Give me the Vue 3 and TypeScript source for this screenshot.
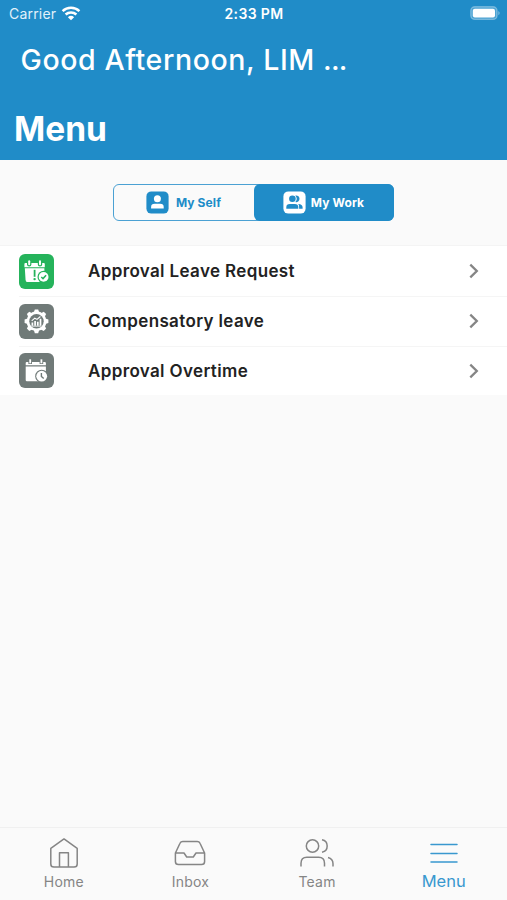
<script setup lang="ts">
import { ref } from 'vue'

interface MenuItem {
  id: 'leave' | 'compensatory' | 'overtime'
  label: string
}

const items: MenuItem[] = [
  { id: 'leave', label: 'Approval Leave Request' },
  { id: 'compensatory', label: 'Compensatory leave' },
  { id: 'overtime', label: 'Approval Overtime' },
]

const scope = ref<'self' | 'work'>('work')
const teeth: number[] = [0, 45, 90, 135, 180, 225, 270, 315]
</script>

<template>
  <div class="screen">
    <header class="header">
      <div class="status">
        <div class="status-side">
          <span class="carrier">Carrier</span>
          <svg class="wifi" width="20" height="15" viewBox="0 0 20 15">
            <path d="M1.6 5.2 A12.2 12.2 0 0 1 18.4 5.2" />
            <path d="M4.6 8.5 A8 8 0 0 1 15.4 8.5" />
            <path class="wifi-dot" d="M10 14.3 L6.9 11.2 A4.5 4.5 0 0 1 13.1 11.2 Z" />
          </svg>
        </div>
        <span class="clock">2:33 PM</span>
        <div class="status-side status-end">
          <svg width="31" height="15" viewBox="0 0 31 15">
            <rect x="0.8" y="0.8" width="26.2" height="12.6" rx="4" fill="#fff" fill-opacity="0.2" stroke="#fff" stroke-opacity="0.32" stroke-width="1.4" />
            <rect x="2.8" y="2.7" width="22.2" height="8.8" rx="2" fill="#fff" />
            <path d="M28.4 5 Q30.8 7.1 28.4 9.2 Z" fill="#fff" fill-opacity="0.45" />
          </svg>
        </div>
      </div>
      <p class="greeting">Good Afternoon, LIM <span class="dots">...</span></p>
      <h1 class="title">Menu</h1>
    </header>

    <div class="switcher">
      <div class="segments">
        <button class="segment segment-self" :class="{ active: scope === 'self' }" @click="scope = 'self'">
          <svg width="23" height="23" viewBox="0 0 23 23">
            <rect class="badge" x="0.4" y="0.4" width="22.2" height="22.2" rx="5" />
            <g class="figure">
              <circle cx="11.4" cy="7.7" r="3.5" />
              <path d="M5.1 17.6 V16 Q5.1 12.7 8.6 12.7 H14.2 Q17.7 12.7 17.7 16 V17.6 Z" />
            </g>
          </svg>
          <span>My Self</span>
        </button>
        <button class="segment segment-work" :class="{ active: scope === 'work' }" @click="scope = 'work'">
          <svg width="23" height="23" viewBox="0 0 23 23">
            <rect class="badge" x="0.4" y="0.4" width="22.2" height="22.2" rx="5" />
            <g class="figure">
              <circle cx="9.4" cy="7.8" r="3.3" />
              <path d="M12.3 4.5 A3.4 3.4 0 1 1 12.3 11.1 Q15.2 7.8 12.3 4.5 Z" />
              <path d="M3.3 17.8 V16.1 Q3.3 12.9 6.9 12.9 H11.8 Q15.3 12.9 15.3 16.1 V17.8 Z" />
              <path d="M15.2 12.9 Q19.6 13.1 19.6 16.3 V17.8 H16.1 V16 Q16.3 14 15.2 12.9 Z" />
            </g>
          </svg>
          <span>My Work</span>
        </button>
      </div>
    </div>

    <ul class="list">
      <li v-for="item in items" :key="item.id" class="row">
        <span class="tile" :class="'tile-' + item.id">
          <svg v-if="item.id === 'leave'" width="35" height="35" viewBox="0 0 35 35">
            <g fill="#fff">
              <rect x="9.2" y="6.3" width="2" height="5" rx="1" />
              <rect x="20" y="6.3" width="2" height="5" rx="1" />
              <path d="M5.4 13.3 V10 Q5.4 9 6.4 9 H8 V10.5 Q8 12.5 10.2 12.5 T12.4 10.5 V9 H18.8 V10.5 Q18.8 12.5 21 12.5 T23.2 10.5 V9 H24.8 Q25.8 9 25.8 10 V13.3 Z" />
              <path d="M5.8 14.3 H25.4 V27 Q25.4 28 24.4 28 H8 Q6.8 28 6.6 26 Z" />
            </g>
            <path d="M15.6 15.8 V22.8" stroke="#25b35b" stroke-width="1.8" />
            <circle cx="15.6" cy="25.1" r="1.2" fill="#25b35b" />
            <circle cx="24.6" cy="22.9" r="6.1" fill="#25b35b" />
            <circle cx="24.6" cy="22.9" r="4.9" fill="#fff" />
            <path d="M22.3 23 L24 24.6 L27.1 21.2" fill="none" stroke="#25b35b" stroke-width="1.5" />
          </svg>
          <svg v-else-if="item.id === 'compensatory'" width="35" height="35" viewBox="0 0 35 35">
            <g fill="#fff">
              <circle cx="17.5" cy="17.3" r="10" />
              <path v-for="angle in teeth" :key="angle" d="M14.8 8.5 L15.8 5.4 H19.2 L20.2 8.5 Z" :transform="`rotate(${angle} 17.5 17.3)`" />
            </g>
            <circle cx="17.5" cy="17.3" r="7.2" fill="#707a78" />
            <g stroke="#fff" fill="none">
              <path d="M13.4 21.8 V18.4 M16.1 21.8 V17.1 M18.8 21.8 V17.8 M21.5 21.8 V14.7" stroke-width="1.7" />
              <path d="M12.7 16.8 L15.8 14.2 L18 15.4 L21.4 12.5" stroke-width="1.1" />
              <path d="M12.2 22.2 H22.6" stroke-width="0.8" />
            </g>
          </svg>
          <svg v-else width="35" height="35" viewBox="0 0 35 35">
            <g fill="#fff">
              <rect x="10.3" y="6.3" width="1.8" height="4" />
              <rect x="21.5" y="6.3" width="1.8" height="4" />
              <path d="M6.7 12.3 V10 Q6.7 8.9 7.8 8.9 H9.4 V11 H13 V8.9 H20.6 V11 H24.2 V8.9 H25.8 Q26.9 8.9 26.9 10 V12.3 Z" />
              <path d="M6.7 13.6 H26.9 V27 Q26.9 28.2 25.7 28.2 H7.9 Q6.7 28.2 6.7 27 Z" />
            </g>
            <circle cx="22.7" cy="23.2" r="6.5" fill="#707a78" />
            <circle cx="22.7" cy="23.2" r="5.4" fill="#fff" />
            <path d="M22.4 19.9 V23.4 L24.7 25.6" fill="none" stroke="#707a78" stroke-width="1.4" />
          </svg>
        </span>
        <span class="label">{{ item.label }}</span>
        <svg class="chevron" width="12" height="16" viewBox="0 0 12 16">
          <path d="M2.3 1.6 L8.8 8 L2.3 14.4" />
        </svg>
      </li>
    </ul>

    <nav class="tabs">
      <a class="tab">
        <svg width="34" height="34" viewBox="0 0 34 34">
          <path d="M3.8 11.4 L17 1.9 L30.2 11.4 V27 Q30.2 30.1 27.1 30.1 H6.9 Q3.8 30.1 3.8 27 Z M12.5 30.1 V15.8 H21.4 V30.1" />
        </svg>
        <span>Home</span>
      </a>
      <a class="tab">
        <svg width="34" height="34" viewBox="0 0 34 34">
          <path d="M2.4 16 L7 6.3 Q7.8 4.5 9.8 4.5 H24.2 Q26.2 4.5 27 6.3 L31.6 16 V24.4 Q31.6 27.5 28.5 27.5 H5.5 Q2.4 27.5 2.4 24.4 Z M2.4 16 H11 L13.7 20 H20.3 L23 16 H31.6" />
        </svg>
        <span>Inbox</span>
      </a>
      <a class="tab">
        <svg width="34" height="34" viewBox="0 0 34 34">
          <circle cx="12.5" cy="9" r="6.2" />
          <path d="M22 2.8 A6.3 6.3 0 0 1 22 15.2 M1 29.4 V26.2 Q1 20.3 6.9 20.3 H18.6 Q24.5 20.3 24.5 26.2 V29.4 M28 20.5 Q33 21.9 33 26.8 V29.4" />
        </svg>
        <span>Team</span>
      </a>
      <a class="tab tab-active">
        <svg width="34" height="34" viewBox="0 0 34 34">
          <path d="M4 7.5 H30 M4 16.4 H30 M4 25 H30" stroke-linecap="round" />
        </svg>
        <span>Menu</span>
      </a>
    </nav>
  </div>
</template>

<style>
body {
  margin: 0;
  background: #fafafa;
}
</style>

<style scoped>
.screen {
  box-sizing: border-box;
  display: flex;
  flex-direction: column;
  width: 100%;
  height: 900px;
  overflow: hidden;
  background: #fafafa;
  font-family: Inter, "Liberation Sans", sans-serif;
}
.header {
  flex: none;
  height: 159.5px;
  background: #208cc8;
  color: #fff;
}
.status {
  display: grid;
  grid-template-columns: 1fr auto 1fr;
  align-items: center;
  height: 27px;
  padding: 0 6px 0 9px;
}
.status-side {
  display: flex;
  align-items: center;
  gap: 5px;
}
.status-end {
  justify-content: flex-end;
}
.carrier {
  font-size: 14px;
  letter-spacing: 0.2px;
  color: #e2f1fa;
}
.wifi {
  fill: none;
  stroke: #fff;
  stroke-width: 2.5;
}
.wifi .wifi-dot {
  fill: #fff;
  stroke: none;
}
.clock {
  margin-right: 2px;
  font-size: 14px;
  font-weight: 600;
  letter-spacing: 0.35px;
}
.greeting {
  margin: 14px 0 0 20.5px;
  font-size: 28.5px;
  font-weight: 500;
  line-height: 38px;
  letter-spacing: 0.6px;
  white-space: nowrap;
}
.dots {
  letter-spacing: -0.8px;
}
.title {
  margin: 27.5px 0 0 14px;
  font-size: 33.5px;
  font-weight: 700;
  line-height: 45px;
}
.switcher {
  box-sizing: border-box;
  flex: none;
  display: flex;
  justify-content: center;
  height: 86.5px;
  padding-top: 24.5px;
  border-bottom: 1.5px solid #f4f4f4;
}
.segments {
  box-sizing: border-box;
  display: flex;
  width: 281px;
  height: 37px;
  border: 1.5px solid #4ba1d3;
  border-radius: 6px;
}
.segment {
  display: flex;
  align-items: center;
  justify-content: center;
  flex: 1;
  gap: 7px;
  margin: 0;
  padding: 0;
  border: 0;
  border-radius: 5px;
  background: transparent;
  color: #208cc8;
  font-family: inherit;
  font-size: 12px;
  font-weight: 700;
  letter-spacing: 0.1px;
}
.segment-self {
  padding-right: 2px;
}
.segment-work {
  gap: 5px;
  margin: -1px;
  padding-right: 1px;
}
.segment.active {
  border-radius: 6px;
  background: #208cc8;
  color: #fff;
}
.segment .badge {
  fill: #208cc8;
}
.segment .figure {
  fill: #fff;
}
.segment.active .badge {
  fill: #fff;
}
.segment.active .figure {
  fill: #208cc8;
}
.list {
  flex: none;
  margin: 0;
  padding: 0;
  list-style: none;
  background: #fff;
}
.row {
  box-sizing: border-box;
  display: flex;
  align-items: center;
  height: 50px;
  padding: 0 27px 0 19px;
}
.row + .row {
  background: linear-gradient(#f5f5f5, #f5f5f5) 19px 0 / 100% 1px no-repeat;
}
.row:last-child {
  height: 49px;
  padding-top: 0.5px;
}
.tile {
  width: 35px;
  height: 35px;
  border-radius: 6px;
  background: #707a78;
}
.tile-leave {
  background: #25b35b;
}
.tile svg {
  display: block;
}
.label {
  flex: 1;
  margin-left: 34px;
  color: #222;
  font-size: 17px;
  font-weight: 600;
  letter-spacing: 0.36px;
}
.chevron {
  fill: none;
  stroke: #858585;
  stroke-width: 2.3;
}
.tabs {
  box-sizing: border-box;
  display: grid;
  grid-template-columns: repeat(4, 1fr);
  height: 73px;
  margin-top: auto;
  padding: 9px 0 0 0.5px;
  border-top: 1.5px solid #f0f0f0;
}
.tab {
  display: flex;
  flex-direction: column;
  align-items: center;
  color: #858585;
  font-size: 14px;
  line-height: 20px;
  letter-spacing: 0.2px;
}
.tab svg {
  flex: none;
  fill: none;
  stroke: currentColor;
  stroke-width: 1.5;
  stroke-linejoin: round;
}
.tab span {
  margin-top: 1px;
}
.tab-active {
  color: #3998cf;
  font-size: 16.5px;
  letter-spacing: 0;
}
.tab-active span {
  margin-top: 0;
}
</style>
